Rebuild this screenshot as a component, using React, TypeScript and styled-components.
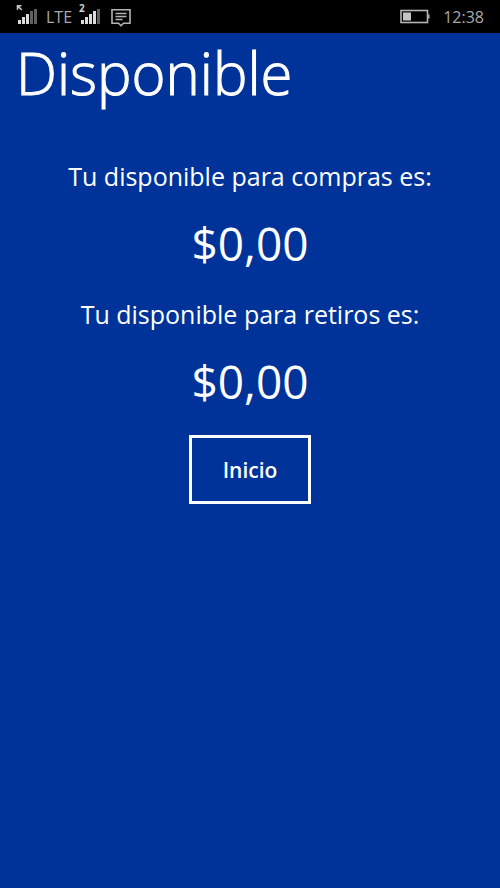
import React from "react";
import styled, { createGlobalStyle } from "styled-components";

const GlobalStyle = createGlobalStyle`
  * { box-sizing: border-box; }
  body {
    margin: 0;
    background: #003399;
    color: #ffffff;
    font-family: "Open Sans", "Noto Sans", sans-serif;
  }
`;

const Screen = styled.div`
  display: flex;
  flex-direction: column;
  min-height: 100vh;
  background: #003399;
`;

const StatusBar = styled.header`
  display: flex;
  align-items: center;
  justify-content: space-between;
  height: 33px;
  padding: 0 16px;
  background: #000000;
  color: #a8a8a8;
  line-height: 33px;
`;

const StatusGroup = styled.div<{ $gap: number }>`
  display: flex;
  align-items: center;
  gap: ${({ $gap }) => $gap}px;
`;

const StatusText = styled.span`
  padding-top: 2px;
  font-size: 16px;
`;

const Icon = styled.svg`
  display: block;
  flex: none;
`;

const Title = styled.h1`
  margin: 0;
  padding: 0 16px;
  font-size: 58px;
  line-height: 80px;
  font-weight: 300;
  -webkit-text-stroke: 1px #ffffff;
`;

const Content = styled.main`
  display: flex;
  flex-direction: column;
  align-items: center;
  padding: 43px 16px;
  text-align: center;
`;

const Label = styled.p`
  margin: 0;
  font-size: 25px;
  line-height: 40px;
`;

const Amount = styled.p`
  margin: 0;
  padding: 12px 0 16px;
  font-size: 46px;
  line-height: 70px;
`;

const HomeButton = styled.button`
  margin: 3px 0 0;
  padding: 17px 31px 15px;
  border: 3px solid #ffffff;
  background: transparent;
  color: inherit;
  font-family: inherit;
  font-size: 21px;
  line-height: 31px;
  font-weight: 600;
  cursor: pointer;
`;

const barHeights = [4, 7, 10, 13, 15];

function Signal({ active, children }: { active: number; children: React.ReactNode }) {
  return (
    <Icon width="22" height="33" viewBox="0 0 22 33" aria-hidden="true">
      {barHeights.map((h, i) => (
        <rect key={h} x={2 + i * 4} y={24 - h} width="3" height={h} fill={i < active ? "#dcdcdc" : "#606060"} />
      ))}
      {children}
    </Icon>
  );
}

function MessageIcon() {
  return (
    <Icon width="20" height="33" viewBox="0 0 20 33" fill="none" stroke="#b4b4b4" strokeWidth="1.6" aria-hidden="true">
      <path d="M1 9.7H19V23.2H12.5L10 25.7L7.5 23.2H1Z" />
      <path d="M4.5 13.5H15.5M4.5 16.5H15.5M4.5 19.5H11.5" />
    </Icon>
  );
}

function BatteryIcon() {
  return (
    <Icon width="30" height="33" viewBox="0 0 30 33" aria-hidden="true">
      <rect x="1" y="10.5" width="26.5" height="12" fill="none" stroke="#b4b4b4" strokeWidth="1.6" />
      <rect x="3" y="12.5" width="8" height="8" fill="#c4c4c4" />
      <rect x="28" y="14.5" width="1.6" height="4" fill="#a4a4a4" />
    </Icon>
  );
}

export default function App() {
  return (
    <Screen>
      <GlobalStyle />
      <StatusBar>
        <StatusGroup $gap={7}>
          <StatusGroup $gap={8}>
            <Signal active={3}>
              <path d="M1.5 9.8V5.8H5.5M1.8 6.1L5.8 10" fill="none" stroke="#c4c4c4" strokeWidth="1.6" />
            </Signal>
            <StatusText>LTE</StatusText>
          </StatusGroup>
          <StatusGroup $gap={10}>
            <Signal active={4}>
              <text x="0" y="12" fill="#d0d0d0" fontSize="10" fontWeight="700">2</text>
            </Signal>
            <MessageIcon />
          </StatusGroup>
        </StatusGroup>
        <StatusGroup $gap={13}>
          <BatteryIcon />
          <StatusText>12:38</StatusText>
        </StatusGroup>
      </StatusBar>
      <Title>Disponible</Title>
      <Content>
        <Label>Tu disponible para compras es:</Label>
        <Amount>$0,00</Amount>
        <Label>Tu disponible para retiros es:</Label>
        <Amount>$0,00</Amount>
        <HomeButton type="button">Inicio</HomeButton>
      </Content>
    </Screen>
  );
}
